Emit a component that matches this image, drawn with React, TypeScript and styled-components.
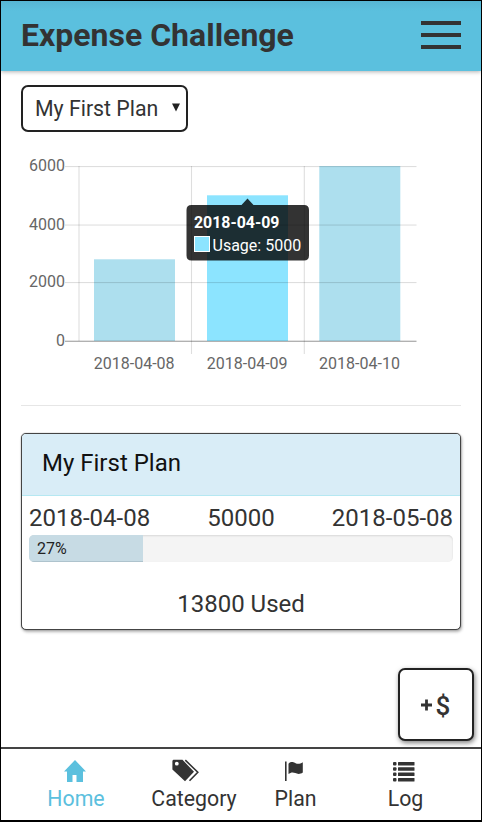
import React from "react";
import styled, { createGlobalStyle } from "styled-components";

const GlobalStyle = createGlobalStyle`
  *, *::before, *::after { box-sizing: border-box; }
  body { margin: 0; background: #fff; font-family: Roboto, "Liberation Sans", sans-serif; color: #333; }
`;

const Screen = styled.div`
  display: flex;
  flex-direction: column;
  width: 482px;
  height: 822px;
  overflow: hidden;
  border: 1px solid #000;
  border-bottom-width: 2px;
  background: #fff;
`;

const Header = styled.header`
  flex: none;
  display: flex;
  align-items: center;
  justify-content: space-between;
  height: 70px;
  padding: 0 20px 2px 20px;
  background: linear-gradient(#57b5d3, #5bc0de 10px);
  box-shadow: 0 1px 4px rgba(0, 0, 0, 0.3);
`;

const Title = styled.h1`
  margin: 0;
  font-size: 32px;
  line-height: 38px;
  font-weight: 700;
  white-space: nowrap;
`;

const MenuButton = styled.button`
  display: grid;
  gap: 8px;
  width: 40px;
  padding: 0;
  border: 0;
  background: none;
`;

const MenuBar = styled.span`
  height: 4px;
  background: #333;
`;

const Content = styled.main`
  flex: 1;
  display: flex;
  flex-direction: column;
  padding: 14px 20px 0;
`;

const PlanPicker = styled.button`
  display: flex;
  align-items: center;
  justify-content: space-between;
  width: 167px;
  height: 47px;
  padding: 0 6px 0 12px;
  border: 2px solid #222;
  border-radius: 7px;
  background: #fff;
  color: #333;
  font: 400 21.3px/26px Roboto, sans-serif;
  white-space: nowrap;

  svg { margin-bottom: 2px; }
`;

const Chart = styled.svg`
  display: block;
  flex: none;
  width: 400px;
  height: 240px;
  margin: 17px 0 0 1px;
  font-family: Roboto, sans-serif;
`;

const Divider = styled.hr`
  width: 100%;
  height: 1px;
  margin: 16px 0 27px;
  border: 0;
  background: #e6e6e6;
`;

const Card = styled.section`
  display: flex;
  flex-direction: column;
  height: 197px;
  flex: none;
  border: 1px solid #444;
  border-radius: 5px;
  box-shadow: 0 0 1px rgba(0, 0, 0, 0.6), 1px 2px 3px rgba(0, 0, 0, 0.3);
  background: #fff;
  overflow: hidden;
`;

const CardHeader = styled.h2`
  margin: 0;
  height: 62px;
  flex: none;
  padding: 0 20px;
  border-bottom: 1px solid #b5e8f2;
  background: #d9edf7;
  color: #111;
  font-size: 24px;
  line-height: 59px;
  font-weight: 400;
`;

const CardBody = styled.div`
  padding: 8px 7px 0;
  font-size: 24px;
  line-height: 28px;
`;

const Facts = styled.div`
  display: flex;
  justify-content: space-between;
`;

const Track = styled.div`
  height: 27px;
  margin: 3px 0 28px;
  border-radius: 5px;
  background: #f4f4f4;
  box-shadow: inset 0 1px 2px rgba(0, 0, 0, 0.12);
  overflow: hidden;
`;

const Fill = styled.div`
  height: 100%;
  padding-left: 8px;
  background: #c7dbe4;
  box-shadow: inset 0 -1px 0 #aec3cd;
  color: #222;
  font-size: 16px;
  line-height: 27px;
`;

const Used = styled.div`
  text-align: center;
`;

const AddButton = styled.button`
  display: flex;
  align-items: center;
  justify-content: center;
  gap: 4px;
  flex: none;
  align-self: flex-end;
  width: 76px;
  height: 73px;
  margin: auto -13px 6px 0;
  padding: 0 1px 0 0;
  border: 2px solid #222;
  border-radius: 7px;
  background: #fff;
  box-shadow: 1px 2px 5px rgba(0, 0, 0, 0.5);
  color: #333;
`;

const Dollar = styled.span`
  padding-top: 2px;
  font: 500 26px/30px Roboto, sans-serif;
`;

const Nav = styled.nav`
  flex: none;
  display: grid;
  grid-template-columns: 150px 86px 117px 103px;
  height: 73px;
  border-top: 2px solid #444;
`;

const NavItem = styled.a<{ $active?: boolean; $iconInset: number }>`
  display: flex;
  flex-direction: column;
  align-items: center;
  padding-top: 9px;
  color: ${(p) => (p.$active ? "#5bc0de" : "#333")};
  font-size: 21.3px;
  line-height: 26px;
  white-space: nowrap;

  svg {
    display: block;
    height: 26px;
    margin: 0 ${(p) => p.$iconInset}px 2px 0;
  }
`;

const bars = [
  { date: "2018-04-08", x: 72, y: 110.3, color: "#addfee" },
  { date: "2018-04-09", x: 185, y: 46.3, color: "#8ce4ff" },
  { date: "2018-04-10", x: 297.3, y: 17, color: "#addfee" },
];
const levels = [
  { value: "6000", y: 17.5 },
  { value: "4000", y: 76 },
  { value: "2000", y: 133.5 },
  { value: "0", y: 192.2 },
];

function UsageChart() {
  return (
    <Chart viewBox="0 0 400 240" role="img" aria-label="Usage by date">
      {bars.map((b) => (
        <g key={b.date}>
          <rect x={b.x} y={b.y} width="81" height={192 - b.y} fill={b.color} />
          <text x={b.x + 40.2} y="219.5" textAnchor="middle" fontSize="16" fill="#666">{b.date}</text>
        </g>
      ))}
      {levels.map((l) => (
        <g key={l.value}>
          <rect x="43" y={l.y - 0.5} width="351.5" height="1.1" fill={l.value === "0" ? "rgba(0,0,0,.38)" : "rgba(0,0,0,.13)"} />
          <text x="43" y={l.y + 4.9} textAnchor="end" fontSize="16" fill="#666">{l.value}</text>
        </g>
      ))}
      <path d="M57 17V192M169.5 17V205M282.3 17V205" stroke="#000" strokeOpacity=".13" strokeWidth="1.1" />
      <path d="M169 56h50.5l6-6.5 6 6.5H282q5 0 5 5v45.5q0 5-5 5H169.5q-5 0-5-5V61q0-5 5-5Z" fill="#000" fillOpacity=".8" />
      <text x="172" y="78.5" fontSize="15.9" fontWeight="700" fill="#fff">2018-04-09</text>
      <rect x="172.5" y="87.5" width="15" height="15" fill="#8ce4ff" stroke="#fff" />
      <text x="190.5" y="102.2" fontSize="16" fill="#fff">Usage: 5000</text>
    </Chart>
  );
}

export default function App() {
  return (
    <>
      <GlobalStyle />
      <Screen>
        <Header>
          <Title>Expense Challenge</Title>
          <MenuButton aria-label="Menu"><MenuBar /><MenuBar /><MenuBar /></MenuButton>
        </Header>
        <Content>
          <PlanPicker>
            My First Plan
            <svg width="8" height="9" viewBox="0 0 8 9"><path d="M0 .5h8L4 8.5z" fill="#222" /></svg>
          </PlanPicker>
          <UsageChart />
          <Divider />
          <Card>
            <CardHeader>My First Plan</CardHeader>
            <CardBody>
              <Facts><span>2018-04-08</span><span>50000</span><span>2018-05-08</span></Facts>
              <Track><Fill style={{ width: "27%" }}>27%</Fill></Track>
              <Used>13800 Used</Used>
            </CardBody>
          </Card>
          <AddButton>
            <svg width="11" height="12" viewBox="0 0 11 12"><path d="M5.5 .5v11M0 6h11" stroke="#333" strokeWidth="2.8" /></svg>
            <Dollar>$</Dollar>
          </AddButton>
        </Content>
        <Nav>
          <NavItem $active $iconInset={3}>
            <svg width="24" height="26" viewBox="0 0 24 26"><path d="M12 2 1 13.5h3V24h5.5v-7h4v7H20V13.5h3z" fill="currentColor" /></svg>
            Home
          </NavItem>
          <NavItem $iconInset={16}>
            <svg width="28" height="26" viewBox="0 0 28 26">
              <path fill="currentColor" fillRule="evenodd" d="M1.3 1.8H10.5L22 13.7 13 23.2 .4 11.5V2.7zM4.8 3.8a1.9 1.9 0 1 0 0 3.8 1.9 1.9 0 0 0 0-3.8z" />
              <path d="M13.3 2.2 25.8 14.2 17.5 22.8" fill="none" stroke="currentColor" strokeWidth="1.6" />
            </svg>
            Category
          </NavItem>
          <NavItem $iconInset={4}>
            <svg width="20" height="26" viewBox="0 0 20 26">
              <path d="M1.8 3.5v19.5" stroke="currentColor" strokeWidth="1.6" />
              <path d="M4.5 5.7C7.5 3 9.5 4.3 12 5.4c2 .8 4.3.4 6.8-1.2v10.3c-2.6 2-5.5 1.6-7.5.6-2.5-1-4.8-.6-6.8 1z" fill="currentColor" />
            </svg>
            Plan
          </NavItem>
          <NavItem $iconInset={4}>
            <svg width="22" height="26" viewBox="0 0 22 26" fill="currentColor">
              {[4, 9.3, 14.6, 19.9].map((y) => (
                <g key={y}><rect x="0" y={y} width="3.5" height="3.5" rx="1" /><rect x="5" y={y} width="16.5" height="3.5" rx=".5" /></g>
              ))}
            </svg>
            Log
          </NavItem>
        </Nav>
      </Screen>
    </>
  );
}
